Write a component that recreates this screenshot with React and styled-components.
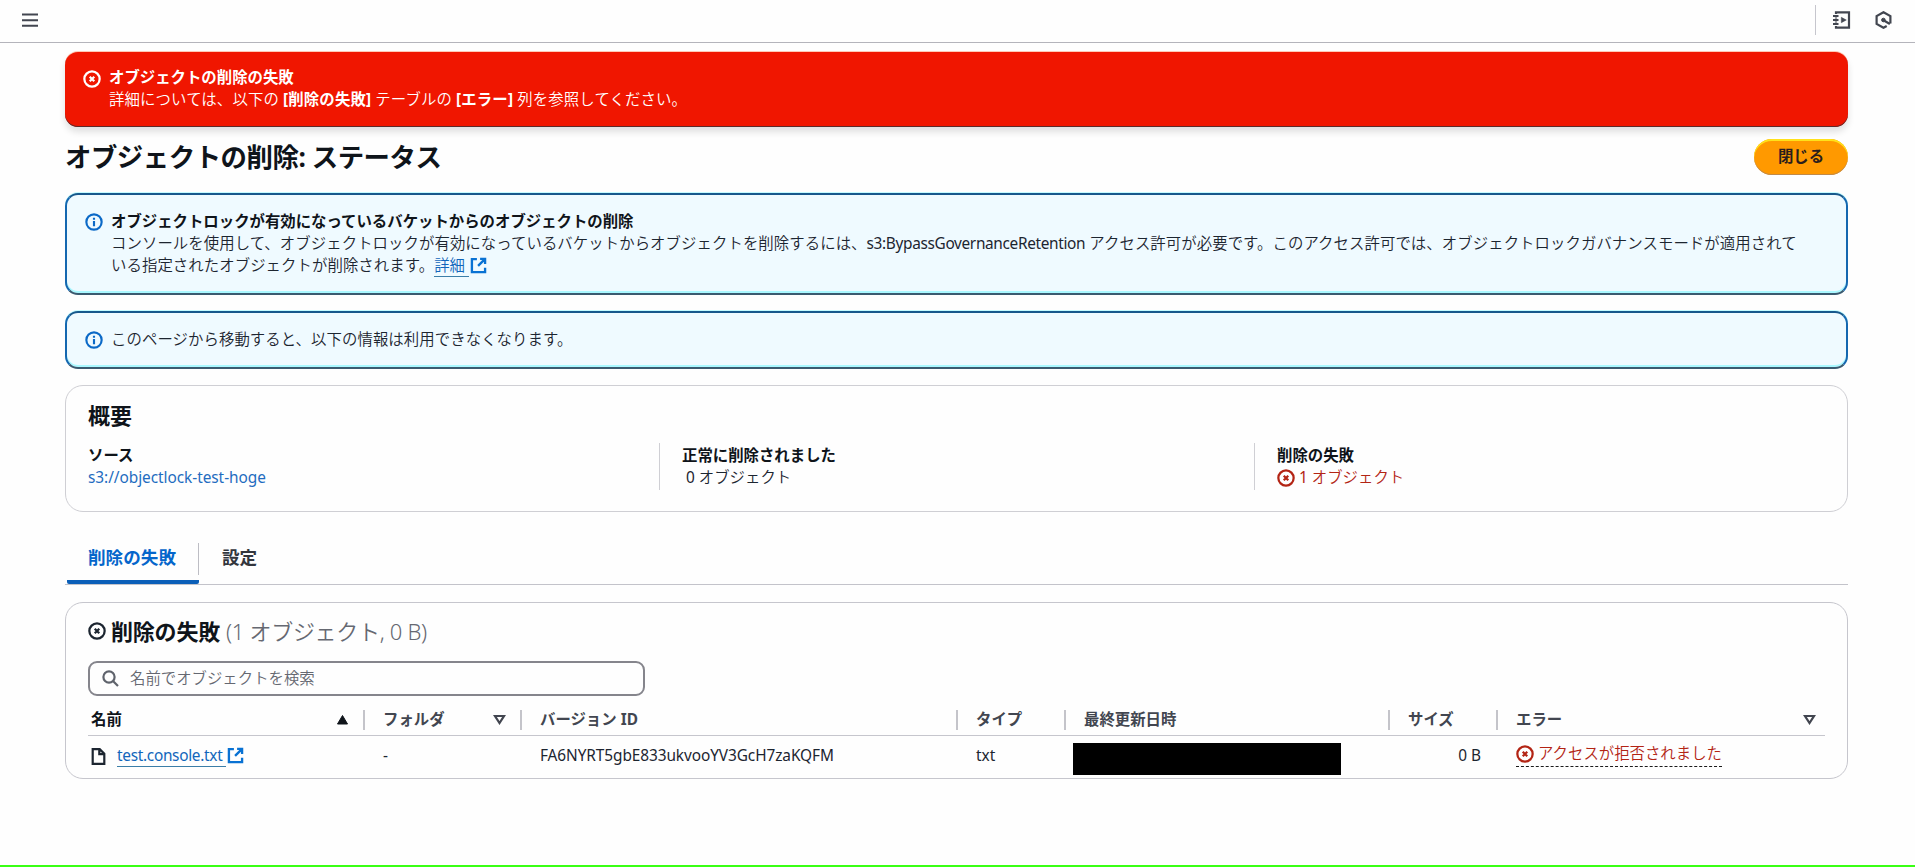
import React from 'react';
import styled, {createGlobalStyle} from 'styled-components';

const columns = [
    {label:"名前",sort:"asc",active:true},
    {label:"フォルダ",sort:"none"},
    {label:"バージョン ID"},
    {label:"タイプ"},
    {label:"最終更新日時"},
    {label:"サイズ"},
    {label:"エラー",sort:"none"},
];

const ErrorIcon = ({size = 18}) => (
    <Svg width={size} height={size} viewBox="0 0 16 16" strokeWidth="2">
        <circle cx="8" cy="8" r="6.8"/>
        <path d="M6 6l4 4M10 6l-4 4"/>
    </Svg>
);

const InfoIcon = () => (
    <Svg width="18" height="18" viewBox="0 0 16 16" strokeWidth="1.9">
        <circle cx="8" cy="8" r="6.8"/>
        <path d="M8 11.8V7.2M8 6V4.2"/>
    </Svg>
);

const ExternalIcon = () => (
    <Svg width="17" height="17" viewBox="0 0 16 16" strokeWidth="2.2">
        <path d="M6.5 2H1.8v12.2h12.4V10M9.5 1.8h4.7v4.7M14 2L7.6 8.4"/>
    </Svg>
);

const SortIcon = ({type}) => (
    <Svg width="13" height="11" viewBox="0 0 13 11" strokeWidth="2.2">
        {type === "asc" ? <path d="M6.5 1.5L11.5 10h-10z" fill="currentColor" strokeWidth="1"/> : <path d="M2 2h9L6.5 9z"/>}
    </Svg>
);

const App = () => {
    return (
        <Page>
            <GlobalStyle/>
            <TopBar>
                <Svg width="16" height="15" viewBox="0 0 16 15" strokeWidth="2">
                    <path d="M0 1.6h16M0 7.2h16M0 12.8h16"/>
                </Svg>
                <Tools>
                    <Svg width="19" height="18" viewBox="0 0 19 18" strokeWidth="2.2">
                        <path d="M4 3V1.3h13v15.4H4V15M4 6.5v1M4 10.5v1"/>
                        <path d="M1 5h5.5M1 9h5.5M1 13h5.5"/>
                        <path d="M9.3 6.3l5 2.7-5 2.7z" fill="currentColor" strokeWidth=".5"/>
                    </Svg>
                    <Svg width="17" height="18" viewBox="0 0 17 18" strokeWidth="2.2">
                        <path d="M15.4 12.6V5.1L8.5 1.2 1.6 5.1v7.8l6.9 3.9 3.2-1.8"/>
                        <path d="M8.5 9.2l6.4 3.8"/>
                        <circle cx="8.4" cy="9" r="1.8" fill="currentColor" strokeWidth="1"/>
                    </Svg>
                </Tools>
            </TopBar>
            <Main>
                <Flash>
                    <ErrorIcon/>
                    <div>
                        <h4>オブジェクトの削除の失敗</h4>
                        <p>詳細については、以下の <b>[削除の失敗]</b> テーブルの <b>[エラー]</b> 列を参照してください。</p>
                    </div>
                </Flash>
                <TitleRow>
                    <h1>オブジェクトの削除: ステータス</h1>
                    <CloseButton>閉じる</CloseButton>
                </TitleRow>
                <InfoBox $height={102}>
                    <InfoIcon/>
                    <div>
                        <h4>オブジェクトロックが有効になっているバケットからのオブジェクトの削除</h4>
                        <p>
                            コンソールを使用して、オブジェクトロックが有効になっているバケットからオブジェクトを削除するには、<Latin $spacing={-0.34}>s3:BypassGovernanceRetention</Latin> アクセス許可が必要です。このアクセス許可では、オブジェクトロックガバナンスモードが適用されて<br/>
                            いる指定されたオブジェクトが削除されます。<Link href="#"><span>詳細</span><ExternalIcon/></Link>
                        </p>
                    </div>
                </InfoBox>
                <InfoBox $height={58}>
                    <InfoIcon/>
                    <p>このページから移動すると、以下の情報は利用できなくなります。</p>
                </InfoBox>
                <Summary>
                    <h2>概要</h2>
                    <SummaryGrid>
                        <div>
                            <h4>ソース</h4>
                            <p className="source"><Latin $spacing={-0.05}>s3://objectlock-test-hoge</Latin></p>
                        </div>
                        <div>
                            <h4>正常に削除されました</h4>
                            <p className="success"><Latin $spacing={0}>0</Latin> オブジェクト</p>
                        </div>
                        <div>
                            <h4>削除の失敗</h4>
                            <p className="failed"><ErrorIcon/><span><Latin $spacing={0}>1</Latin> オブジェクト</span></p>
                        </div>
                    </SummaryGrid>
                </Summary>
                <Tabs>
                    <Tab $active>削除の失敗</Tab>
                    <Tab>設定</Tab>
                </Tabs>
                <TableCard>
                    <TableTitle>
                        <ErrorIcon/>
                        <h2>削除の失敗</h2>
                        <span>(1 オブジェクト, 0 B)</span>
                    </TableTitle>
                    <Search>
                        <Svg width="17" height="17" viewBox="0 0 17 17" strokeWidth="2.2">
                            <circle cx="7" cy="7" r="5.6"/>
                            <path d="M11 11l5 5"/>
                        </Svg>
                        <input placeholder="名前でオブジェクトを検索"/>
                    </Search>
                    <HeadRow>
                        {columns.map(column => (
                            <HeadCell key={column.label} $active={column.active}>
                                <span>{column.label}</span>
                                {column.sort && <SortIcon type={column.sort}/>}
                            </HeadCell>
                        ))}
                    </HeadRow>
                    <Row>
                        <NameCell>
                            <Svg width="15" height="17" viewBox="0 0 14 17" strokeWidth="2.2">
                                <path d="M1.2 1.2h7l4.6 4.6v10H1.2zM7.8 1.2v5h5"/>
                            </Svg>
                            <Link href="#"><span><Latin $spacing={-0.3}>test.console.txt</Latin></span><ExternalIcon/></Link>
                        </NameCell>
                        <Cell><Latin $spacing={0}>-</Latin></Cell>
                        <Cell><Latin $spacing={-0.08}>FA6NYRT5gbE833ukvooYV3GcH7zaKQFM</Latin></Cell>
                        <Cell><Latin $spacing={0}>txt</Latin></Cell>
                        <DateCell><Redacted/></DateCell>
                        <SizeCell><Latin $spacing={0}>0 B</Latin></SizeCell>
                        <Cell><ErrorText><ErrorIcon/>アクセスが拒否されました</ErrorText></Cell>
                    </Row>
                </TableCard>
            </Main>
            <BottomLine/>
        </Page>
    )
}

const GlobalStyle = createGlobalStyle`
    *{
        box-sizing:border-box;
        margin:0;
        padding:0;
    }
    body{
        background:#fefefe;
        color:#1c2530;
        font-family:"Noto Sans","Noto Sans CJK JP",sans-serif;
        font-size:15.4px;
        font-weight:350;
        line-height:22px;
    }
    h1,h2,h4{
        color:#0f141a;
        font-weight:700;
    }
    h4{
        font-size:15.4px;
    }
    b{
        font-weight:700;
    }
`;

const Page = styled.div`
    display:flex;
    flex-direction:column;
    height:867px;
    overflow:hidden;
    white-space:nowrap;
`;

const Svg = styled.svg`
    display:block;
    flex:none;
    fill:none;
    stroke:currentColor;
`;

const Latin = styled.span`
    font-weight:400;
    letter-spacing:${({$spacing}) => $spacing}px;
`;

const TopBar = styled.header`
    display:flex;
    align-items:center;
    justify-content:space-between;
    height:43px;
    padding:0 23px 2px 22px;
    border-bottom:1px solid #b4b4bb;
    color:#424650;
    flex:none;
`;

const Tools = styled.div`
    display:flex;
    align-items:center;
    gap:24px;
    height:30px;
    padding-left:16px;
    border-left:1px solid #c6c6cd;
`;

const Main = styled.main`
    flex:1;
    padding:9px 67px 0 65px;
`;

const Flash = styled.div`
    display:flex;
    gap:8px;
    height:75px;
    padding:15px 18px;
    border-radius:13px;
    background:#f01600;
    color:#fff;
    box-shadow:0 -1px 0 #ffc9b5,inset 0 -1px 0 #5c2a2a,0 5px 7px rgba(0,0,0,.12);
    h4{
        color:#fff;
    }
    p{
        letter-spacing:.13px;
    }
    > svg{
        margin-top:3px;
    }
`;

const TitleRow = styled.div`
    display:flex;
    align-items:center;
    justify-content:space-between;
    height:37px;
    margin:11px 0 18px;
    h1{
        padding-top:1px;
        font-size:26.4px;
        line-height:33px;
        letter-spacing:-.46px;
    }
`;

const CloseButton = styled.button`
    width:94px;
    height:36px;
    border:none;
    border-radius:18px;
    background:#ff9900;
    box-shadow:inset 0 2px 0 #ffe11a,inset 0 -1px 0 #c08a4a;
    color:#2a1d1d;
    font:700 15.4px/22px "Noto Sans","Noto Sans CJK JP",sans-serif;
    cursor:pointer;
`;

const InfoBox = styled.div`
    display:flex;
    gap:8px;
    height:${({$height}) => $height}px;
    margin-bottom:16px;
    padding:16px 18px;
    border:2px solid #1467b0;
    border-top-color:#17588c;
    border-bottom-color:#3a5a70;
    border-radius:13px;
    background:#effaff;
    box-shadow:0 -1px 0 #c4fbff,inset 0 -2px 0 #a9f8ff;
    p{
        letter-spacing:.07px;
    }
    > svg{
        margin-top:2px;
        color:#0b69c7;
    }
`;

const Link = styled.a`
    display:inline-flex;
    align-items:center;
    gap:1px;
    vertical-align:top;
    color:#1166bb;
    text-decoration:none;
    > span{
        height:22px;
        padding-right:4px;
        border-bottom:1px solid #3b7ea8;
    }
    svg{
        margin-bottom:2px;
        color:#0972d3;
    }
`;

const Summary = styled.section`
    height:127px;
    padding:13px 22px;
    border:1px solid #cfcfd4;
    border-radius:18px;
    h2{
        font-size:22px;
        line-height:32px;
    }
`;

const SummaryGrid = styled.div`
    display:grid;
    grid-template-columns:571px 595px 1fr;
    margin-top:12px;
    > div{
        height:47px;
        padding:2px 0 0;
    }
    > div + div{
        padding-left:22px;
        border-left:1px solid #cfcfd4;
    }
    .source{
        color:#1f6cc0;
    }
    .success{
        padding-left:4px;
    }
    .failed{
        display:flex;
        align-items:center;
        gap:4px;
        color:#b32414;
    }
`;

const Tabs = styled.nav`
    display:flex;
    height:50px;
    margin-top:23px;
    border-bottom:1px solid #c3c3ca;
`;

const Tab = styled.div`
    display:flex;
    align-items:flex-start;
    width:${({$active}) => $active ? "132px" : "auto"};
    height:49px;
    margin-left:${({$active}) => $active ? "2px" : "0"};
    padding-left:${({$active}) => $active ? "21px" : "23px"};
    border-bottom:${({$active}) => $active ? "4px solid #0b5fb8" : "none"};
    border-radius:2px;
    color:${({$active}) => $active ? "#0566cb" : "#33363d"};
    font-size:17.6px;
    font-weight:700;
    line-height:45px;
    &:first-child::after{
        content:"";
        width:1px;
        height:32px;
        margin:8px 0 0 auto;
        background:#bdbdc4;
    }
`;

const TableCard = styled.section`
    height:177px;
    margin-top:17px;
    padding:14px 22px 0;
    border:1px solid #c6c6cd;
    border-radius:18px;
`;

const TableTitle = styled.div`
    display:flex;
    align-items:center;
    height:28px;
    h2{
        margin:0 6px 0 5px;
        font-size:22px;
        letter-spacing:-.2px;
    }
    span{
        color:#656871;
        font-size:22px;
        letter-spacing:-.3px;
    }
`;

const Search = styled.div`
    display:flex;
    align-items:center;
    gap:11px;
    width:557px;
    height:35px;
    margin-top:16px;
    padding:0 12px;
    border:2px solid #85858c;
    border-radius:9px;
    color:#5f636c;
    input{
        flex:1;
        border:none;
        outline:none;
        background:none;
        font:350 15.4px/22px "Noto Sans","Noto Sans CJK JP",sans-serif;
    }
    input::placeholder{
        color:#656871;
    }
`;

const HeadRow = styled.div`
    display:grid;
    grid-template-columns:277px 157px 436px 108px 324px 108px 327px;
    align-items:center;
    height:40px;
    padding-top:8px;
    border-bottom:1px solid #c6c6cd;
`;

const HeadCell = styled.div`
    display:flex;
    align-items:center;
    justify-content:space-between;
    height:20px;
    padding:0 14px 0 18px;
    border-right:2px solid #c4c4ca;
    color:${({$active}) => $active ? "#0f141a" : "#424650"};
    font-weight:700;
    &:first-child{
        padding-left:3px;
    }
    &:last-child{
        padding-right:9px;
        border-right:none;
    }
`;

const Row = styled(HeadRow)`
    align-items:start;
    height:41px;
    padding-top:7px;
    border-bottom:none;
`;

const Cell = styled.div`
    padding:2px 0 0 18px;
`;

const NameCell = styled(Cell)`
    display:flex;
    align-items:center;
    gap:11px;
    padding-left:3px;
`;

const DateCell = styled(Cell)`
    padding:0 0 0 7px;
`;

const SizeCell = styled(Cell)`
    padding-right:17px;
    text-align:right;
`;

const Redacted = styled.div`
    width:268px;
    height:32px;
    background:#000;
`;

const ErrorText = styled.span`
    display:inline-flex;
    align-items:center;
    gap:4px;
    height:23px;
    margin-top:-1px;
    padding-bottom:2px;
    vertical-align:top;
    border-bottom:1px dashed #1b1b1b;
    color:#b32414;
`;

const BottomLine = styled.div`
    height:2px;
    background:#39ff14;
    flex:none;
`;

export default App
